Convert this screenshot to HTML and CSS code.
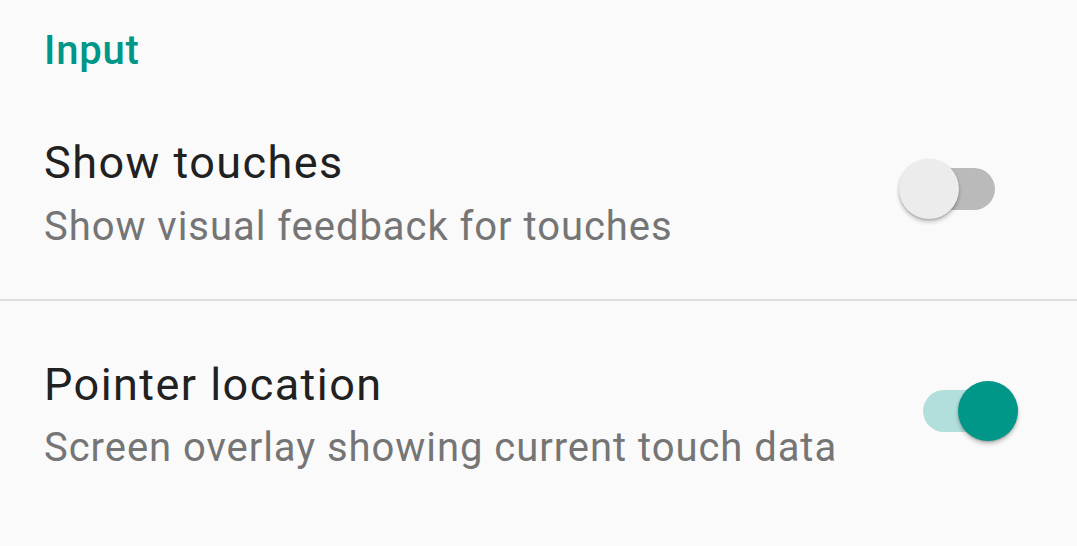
FILE: index.html
```html
<!DOCTYPE html>
<html>
<head>
<meta charset="utf-8">
<link rel="stylesheet" href="styles.css">
</head>
<body>
<div class="screen">
  <div class="category">Input</div>
  <div class="pref pref-first">
    <div class="pref-text">
      <div class="pref-title">Show touches</div>
      <div class="pref-summary">Show visual feedback for touches</div>
    </div>
    <div class="switch switch-off">
      <div class="track"></div>
      <div class="thumb"></div>
    </div>
  </div>
  <div class="divider"></div>
  <div class="pref pref-second">
    <div class="pref-text">
      <div class="pref-title">Pointer location</div>
      <div class="pref-summary summary-tight">Screen overlay showing current touch data</div>
    </div>
    <div class="switch switch-on">
      <div class="track"></div>
      <div class="thumb"></div>
    </div>
  </div>
</div>
</body>
</html>
```
FILE: styles.css
```css
html, body {
  margin: 0;
  padding: 0;
  background: #fafafa;
}
body {
  font-family: Roboto, "Noto Sans", sans-serif;
  width: 1077px;
  height: 546px;
  overflow: hidden;
}
.screen {
  display: flex;
  flex-direction: column;
}
.category {
  padding: 27px 0 0 44px;
  font-size: 40px;
  line-height: 48px;
  font-weight: 500;
  letter-spacing: 0.8px;
  color: #009688;
}
.pref {
  display: flex;
  align-items: center;
  padding-left: 44px;
  padding-right: 58px;
}
.pref-first {
  padding-top: 60px;
  padding-bottom: 44px;
}
.pref-second {
  padding-top: 56px;
}
.pref-text {
  flex: 1;
}
.pref-title {
  font-size: 45px;
  line-height: 56px;
  letter-spacing: 1.45px;
  color: #212121;
}
.pref-summary {
  font-size: 40px;
  line-height: 56px;
  letter-spacing: 0.95px;
  color: #757575;
  margin-top: 8px;
}
.summary-tight {
  margin-top: 7px;
}
.divider {
  height: 2px;
  background: #dedede;
}
.switch {
  position: relative;
  width: 120px;
  height: 60px;
  margin-bottom: 12px;
  flex: none;
}
.track {
  position: absolute;
  left: 24px;
  top: 9px;
  width: 72px;
  height: 42px;
  border-radius: 21px;
}
.thumb {
  position: absolute;
  top: 0;
  width: 60px;
  height: 60px;
  border-radius: 50%;
  box-shadow: 0 3px 4px rgba(0, 0, 0, 0.22), 0 1px 2px rgba(0, 0, 0, 0.18);
}
.switch-off .track {
  background: #bababa;
}
.switch-off .thumb {
  left: 0;
  background: #ececec;
}
.switch-on .track {
  background: #b2dfdb;
}
.switch-on .thumb {
  left: 59px;
  background: #009688;
}
```
